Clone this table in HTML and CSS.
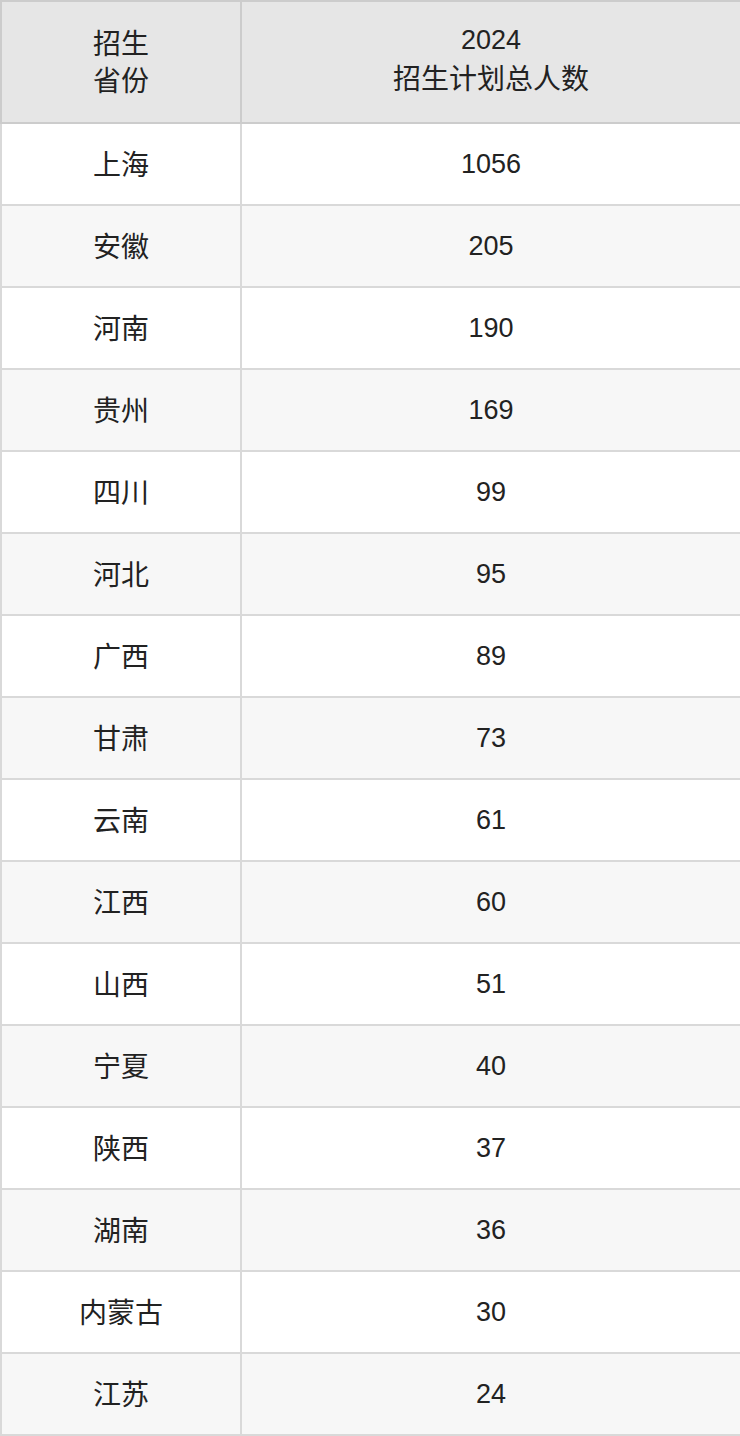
FILE: index.html
```html
<!DOCTYPE html>
<html lang="zh-CN">
<head>
<meta charset="utf-8">
<title>招生计划</title>
<link rel="stylesheet" href="styles.css">
</head>
<body>
<table class="plan">
  <colgroup>
    <col class="c-prov">
    <col class="c-num">
  </colgroup>
  <thead>
    <tr>
      <th class="zh">招生<br>省份</th>
      <th><span class="num">2024</span><br><span class="zh">招生计划总人数</span></th>
    </tr>
  </thead>
  <tbody>
    <tr><td class="zh">上海</td><td class="num">1056</td></tr>
    <tr><td class="zh">安徽</td><td class="num">205</td></tr>
    <tr><td class="zh">河南</td><td class="num">190</td></tr>
    <tr><td class="zh">贵州</td><td class="num">169</td></tr>
    <tr><td class="zh">四川</td><td class="num">99</td></tr>
    <tr><td class="zh">河北</td><td class="num">95</td></tr>
    <tr><td class="zh">广西</td><td class="num">89</td></tr>
    <tr><td class="zh">甘肃</td><td class="num">73</td></tr>
    <tr><td class="zh">云南</td><td class="num">61</td></tr>
    <tr><td class="zh">江西</td><td class="num">60</td></tr>
    <tr><td class="zh">山西</td><td class="num">51</td></tr>
    <tr><td class="zh">宁夏</td><td class="num">40</td></tr>
    <tr><td class="zh">陕西</td><td class="num">37</td></tr>
    <tr><td class="zh">湖南</td><td class="num">36</td></tr>
    <tr><td class="zh">内蒙古</td><td class="num">30</td></tr>
    <tr><td class="zh">江苏</td><td class="num">24</td></tr>
  </tbody>
</table>
</body>
</html>
```
FILE: styles.css
```css
html, body {
  margin: 0;
  padding: 0;
  background: #ffffff;
}
.plan {
  width: 740px;
  table-layout: fixed;
  border-collapse: collapse;
  font-family: "Liberation Sans", "Noto Sans CJK SC", sans-serif;
  font-size: 27px;
  color: #222222;
}
.c-prov { width: 240px; }
.c-num { width: 500px; }
.plan th,
.plan td {
  border: 2px solid #d9d9d9;
  text-align: center;
  vertical-align: middle;
  padding: 0;
}
.plan th {
  background: #e6e6e6;
  font-weight: normal;
  line-height: 37px;
  height: 117px;
  padding-bottom: 3px;
  border-color: #cccccc;
}
.plan td {
  height: 80px;
  line-height: 38px;
}
.plan td.zh {
  height: 77px;
  padding-bottom: 3px;
}
.plan .zh {
  font-family: "Noto Sans CJK SC", sans-serif;
  font-size: 28px;
}
.plan .num {
  font-family: "Liberation Sans", sans-serif;
  font-size: 27px;
}
.plan tbody tr:nth-child(even) td {
  background: #f7f7f7;
}
```
